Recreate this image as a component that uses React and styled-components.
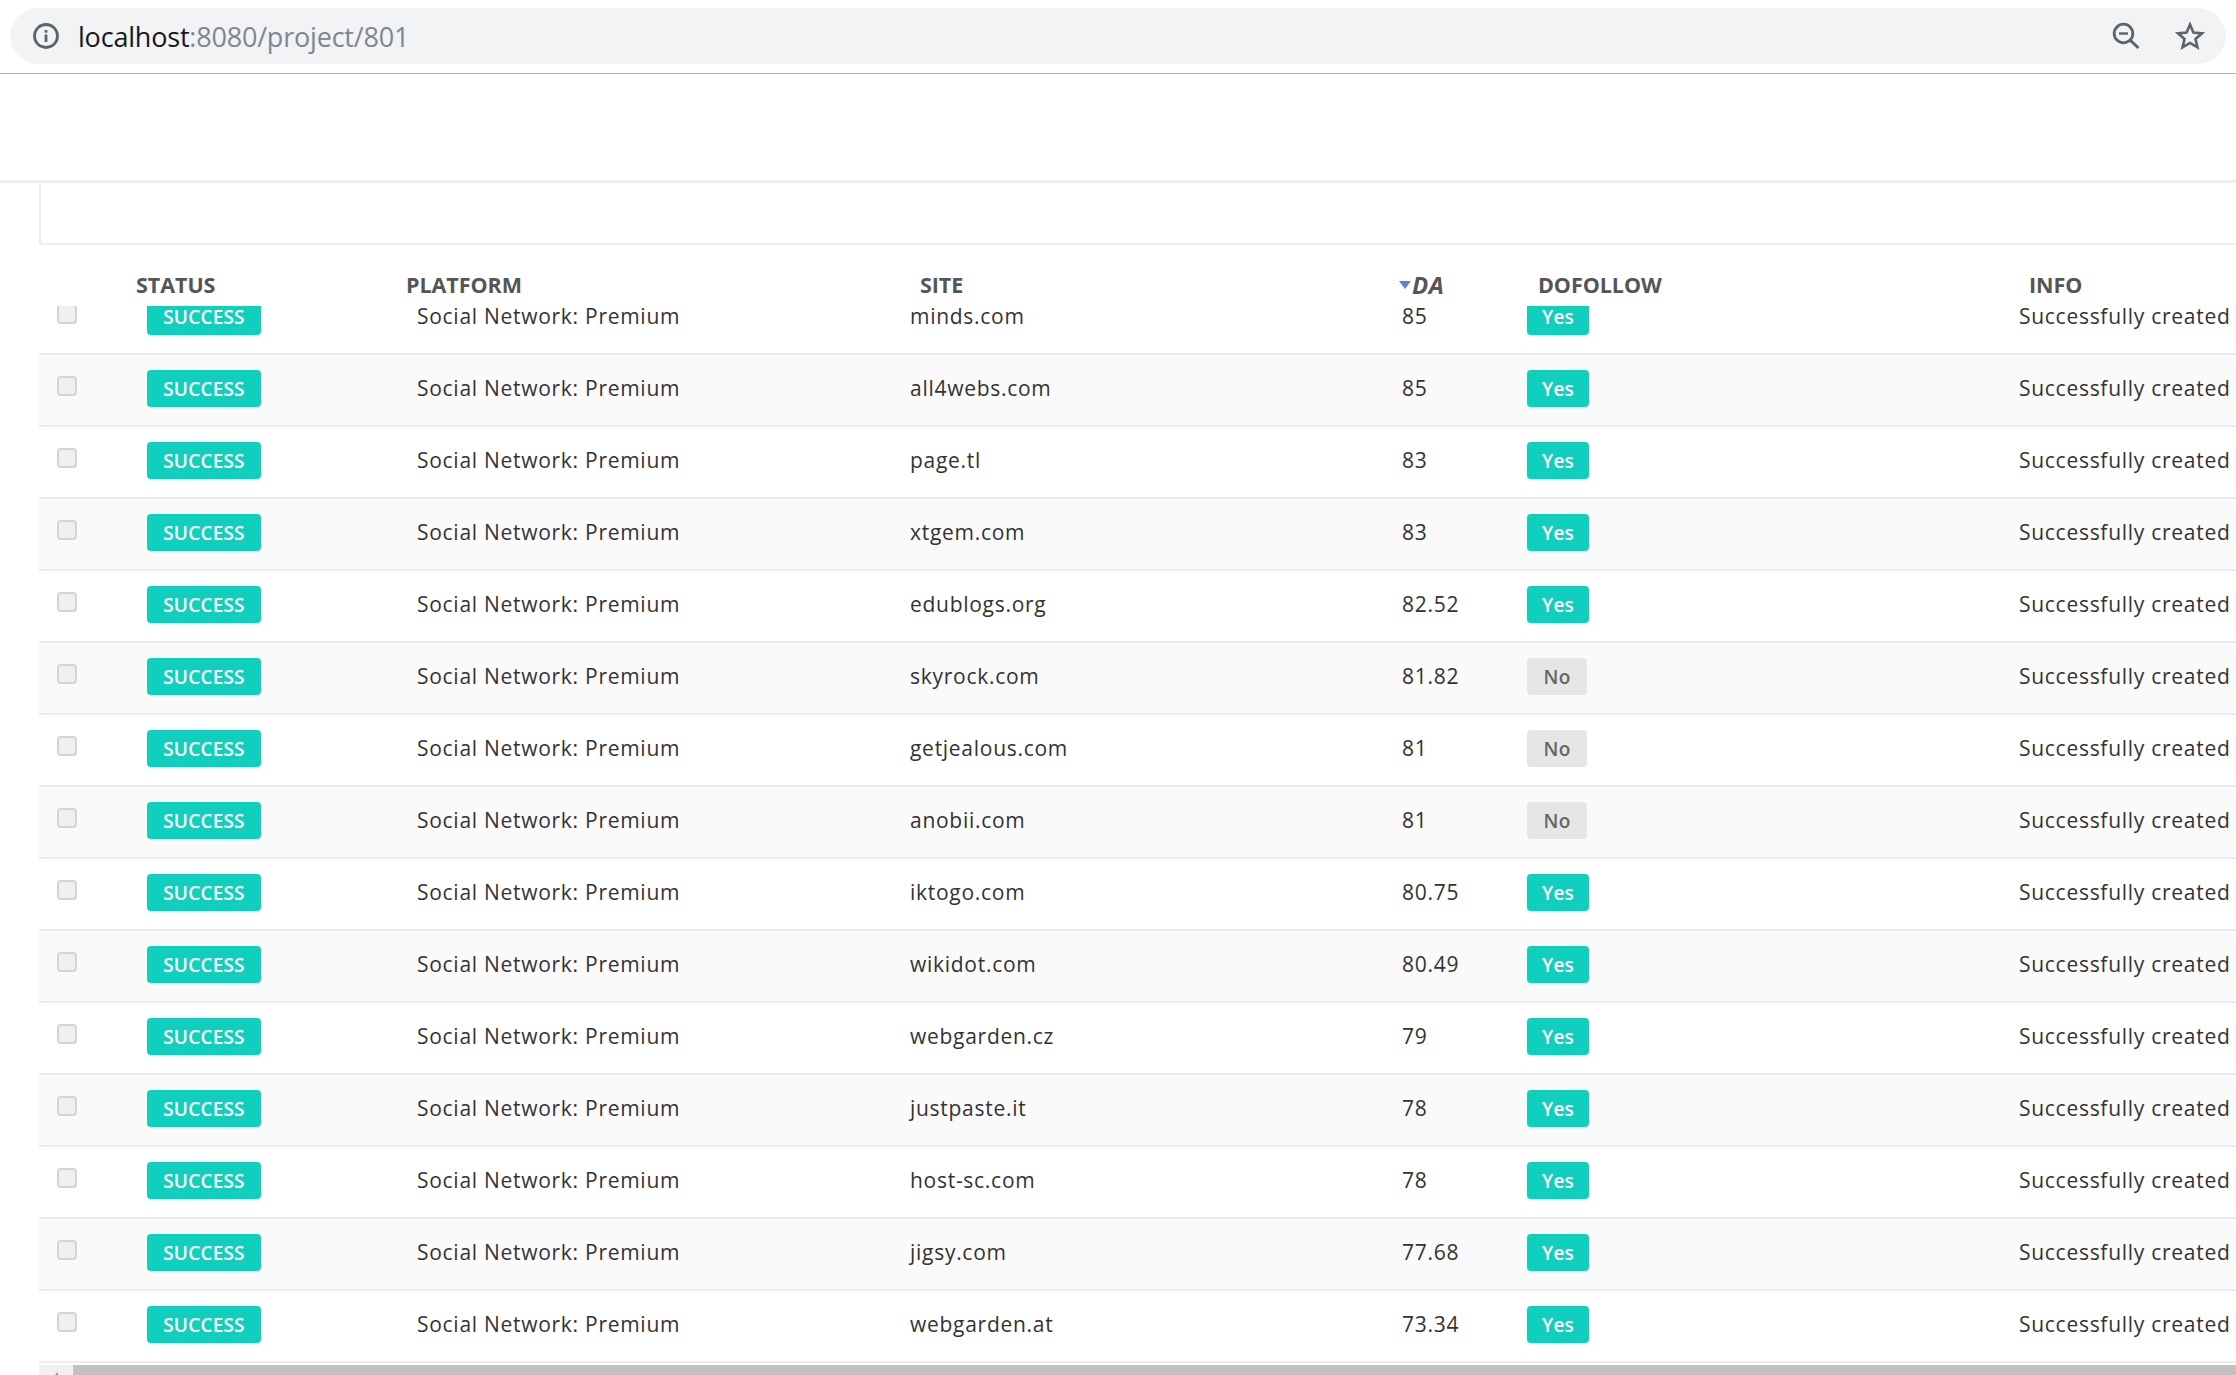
import React from "react";
import styled, { createGlobalStyle } from "styled-components";

const Global = createGlobalStyle`
  html, body { margin: 0; padding: 0; background: #fff; }
  body { font-family: "Open Sans", "Noto Sans", sans-serif; color: #333; }
`;

const Page = styled.div`
  width: 2236px;
  height: 1375px;
  overflow: hidden;
  display: flex;
  flex-direction: column;
  background: #fff;
`;

const BrowserBar = styled.header`
  height: 74px;
  flex: none;
  box-sizing: border-box;
  padding: 8px 10px 9px;
  border-bottom: 1px solid #b4b4b4;
`;

const Omnibox = styled.div`
  height: 56px;
  border-radius: 28px;
  background: #f1f3f4;
  display: flex;
  align-items: center;
  padding: 0 21px 0 23px;
`;

const Url = styled.div`
  flex: 1;
  margin-left: 19px;
  font-size: 27px;
  letter-spacing: -0.2px;
  color: #7c8791;
`;

const Host = styled.span`
  color: #16181c;
`;

const ToolIcon = styled.svg`
  display: block;
  flex: none;
  margin-left: ${(p) => p.$gap || 0}px;
`;

const TopSpace = styled.div`
  height: 106px;
  flex: none;
  border-bottom: 3px solid #eeeeee;
`;

const Content = styled.main`
  padding-left: 39px;
  flex: 1;
  min-height: 0;
  display: flex;
  flex-direction: column;
`;

const FilterCard = styled.section`
  height: 62px;
  flex: none;
  box-sizing: border-box;
  border-left: 2px solid #eeeeee;
  border-bottom: 2px solid #eeeeee;
  border-radius: 0 0 0 3px;
`;

const HeaderRow = styled.div`
  height: 61px;
  flex: none;
  display: grid;
  grid-template-columns: 97px 270px 514px 479px 139px 491px 1fr;
  align-items: end;
  box-sizing: border-box;
  padding-bottom: 7px;
  font-size: 21.5px;
  font-weight: 700;
  color: #555;
  line-height: 28px;
`;

const HeaderCell = styled.div`
  display: flex;
  align-items: center;
  white-space: nowrap;
  font-style: ${(p) => (p.$sorted ? "italic" : "normal")};
  font-size: ${(p) => (p.$sorted ? "24px" : "inherit")};
  letter-spacing: ${(p) => (p.$sorted ? "0.5px" : "-0.05px")};
`;

const SortArrow = styled.span`
  width: 0;
  height: 0;
  margin-right: 1px;
  border-left: 6px solid transparent;
  border-right: 6px solid transparent;
  border-top: 8px solid #5b85c8;
`;

const TableBody = styled.div`
  height: 1059px;
  overflow: hidden;
  flex: none;
`;

const RowList = styled.div`
  margin-top: -23px;
`;

const Row = styled.div`
  height: 72px;
  box-sizing: border-box;
  display: grid;
  grid-template-columns: 108px 270px 493px 492px 125px 492px 1fr;
  align-items: center;
  background: ${(p) => (p.$striped ? "#fafafa" : "#fff")};
  border-bottom: 2px solid #e9eef2;
  font-size: 21px;
  white-space: nowrap;
`;

const CheckCell = styled.div`
  padding: 0 0 8px 18px;
`;

const Check = styled.span`
  display: block;
  width: 20px;
  height: 20px;
  box-sizing: border-box;
  border: 2px solid #d4d4d4;
  border-radius: 4px;
  background: #f0f0f0;
`;

const Badge = styled.span`
  display: inline-flex;
  align-items: center;
  justify-content: center;
  box-sizing: border-box;
  height: 37px;
  border-radius: 4px;
  font-size: 19px;
  font-weight: 600;
  letter-spacing: 0.2px;
  width: ${(p) => p.$w}px;
  background: ${(p) => (p.$muted ? "#e6e6e6" : "#10d0bd")};
  color: ${(p) => (p.$muted ? "#666" : "#fff")};
`;

const Cell = styled.div`
  padding-bottom: 5px;
  letter-spacing: 0.72px;
  color: #333;
`;

const BadgeCell = styled.div`
  display: flex;
  padding-bottom: 3px;
`;

const Scrollbar = styled.div`
  flex: 1;
  display: flex;
  background: #f1f1f1;
`;

const ScrollButton = styled.div`
  width: 34px;
  flex: none;
  position: relative;
  &::after {
    content: "";
    position: absolute;
    left: 14px;
    top: 7px;
    border-top: 5px solid transparent;
    border-bottom: 5px solid transparent;
    border-right: 5px solid #8a8a8a;
  }
`;

const ScrollThumb = styled.div`
  flex: 1;
  background: #c1c1c1;
`;

const sites = [
  ["minds.com", "85", true],
  ["all4webs.com", "85", true],
  ["page.tl", "83", true],
  ["xtgem.com", "83", true],
  ["edublogs.org", "82.52", true],
  ["skyrock.com", "81.82", false],
  ["getjealous.com", "81", false],
  ["anobii.com", "81", false],
  ["iktogo.com", "80.75", true],
  ["wikidot.com", "80.49", true],
  ["webgarden.cz", "79", true],
  ["justpaste.it", "78", true],
  ["host-sc.com", "78", true],
  ["jigsy.com", "77.68", true],
  ["webgarden.at", "73.34", true],
];

export default function App() {
  return (
    <Page>
      <Global />
      <BrowserBar>
        <Omnibox>
          <ToolIcon width="26" height="26" viewBox="0 0 26 26" fill="none">
            <circle cx="13" cy="13" r="11.5" stroke="#5f6368" strokeWidth="2.8" />
            <rect x="11.6" y="11.5" width="2.8" height="7.5" fill="#5f6368" />
            <rect x="11.6" y="7" width="2.8" height="2.7" fill="#5f6368" />
          </ToolIcon>
          <Url>
            <Host>localhost</Host>:8080/project/801
          </Url>
          <ToolIcon width="28" height="28" viewBox="0 0 28 28" fill="none">
            <circle cx="11.5" cy="11.5" r="9.3" stroke="#5f6368" strokeWidth="2.8" />
            <path d="M7 11.5h9" stroke="#5f6368" strokeWidth="2.4" />
            <path d="M18.5 18.5l8 7.5" stroke="#5f6368" strokeWidth="3" />
          </ToolIcon>
          <ToolIcon $gap={35} width="30" height="30" viewBox="0 0 30 30" fill="none">
            <path
              d="M15 3.6l3.4 8 8.6.75-6.5 5.65 1.95 8.4L15 21.9l-7.45 4.5 1.95-8.4L3 12.35l8.6-.75z"
              stroke="#5f6368"
              strokeWidth="2.6"
              strokeLinejoin="miter"
            />
          </ToolIcon>
        </Omnibox>
      </BrowserBar>
      <TopSpace />
      <Content>
        <FilterCard />
        <HeaderRow>
          <span />
          <HeaderCell>STATUS</HeaderCell>
          <HeaderCell>PLATFORM</HeaderCell>
          <HeaderCell>SITE</HeaderCell>
          <HeaderCell $sorted>
            <SortArrow />
            DA
          </HeaderCell>
          <HeaderCell>DOFOLLOW</HeaderCell>
          <HeaderCell>INFO</HeaderCell>
        </HeaderRow>
        <TableBody>
          <RowList>
            {sites.map(([site, da, follow], i) => (
              <Row key={site} $striped={i % 2 === 1}>
                <CheckCell>
                  <Check />
                </CheckCell>
                <BadgeCell>
                  <Badge $w={114}>SUCCESS</Badge>
                </BadgeCell>
                <Cell>Social Network: Premium</Cell>
                <Cell>{site}</Cell>
                <Cell>{da}</Cell>
                <BadgeCell>
                  {follow ? <Badge $w={62}>Yes</Badge> : <Badge $w={60} $muted>No</Badge>}
                </BadgeCell>
                <Cell>Successfully created</Cell>
              </Row>
            ))}
          </RowList>
        </TableBody>
        <Scrollbar>
          <ScrollButton />
          <ScrollThumb />
        </Scrollbar>
      </Content>
    </Page>
  );
}
